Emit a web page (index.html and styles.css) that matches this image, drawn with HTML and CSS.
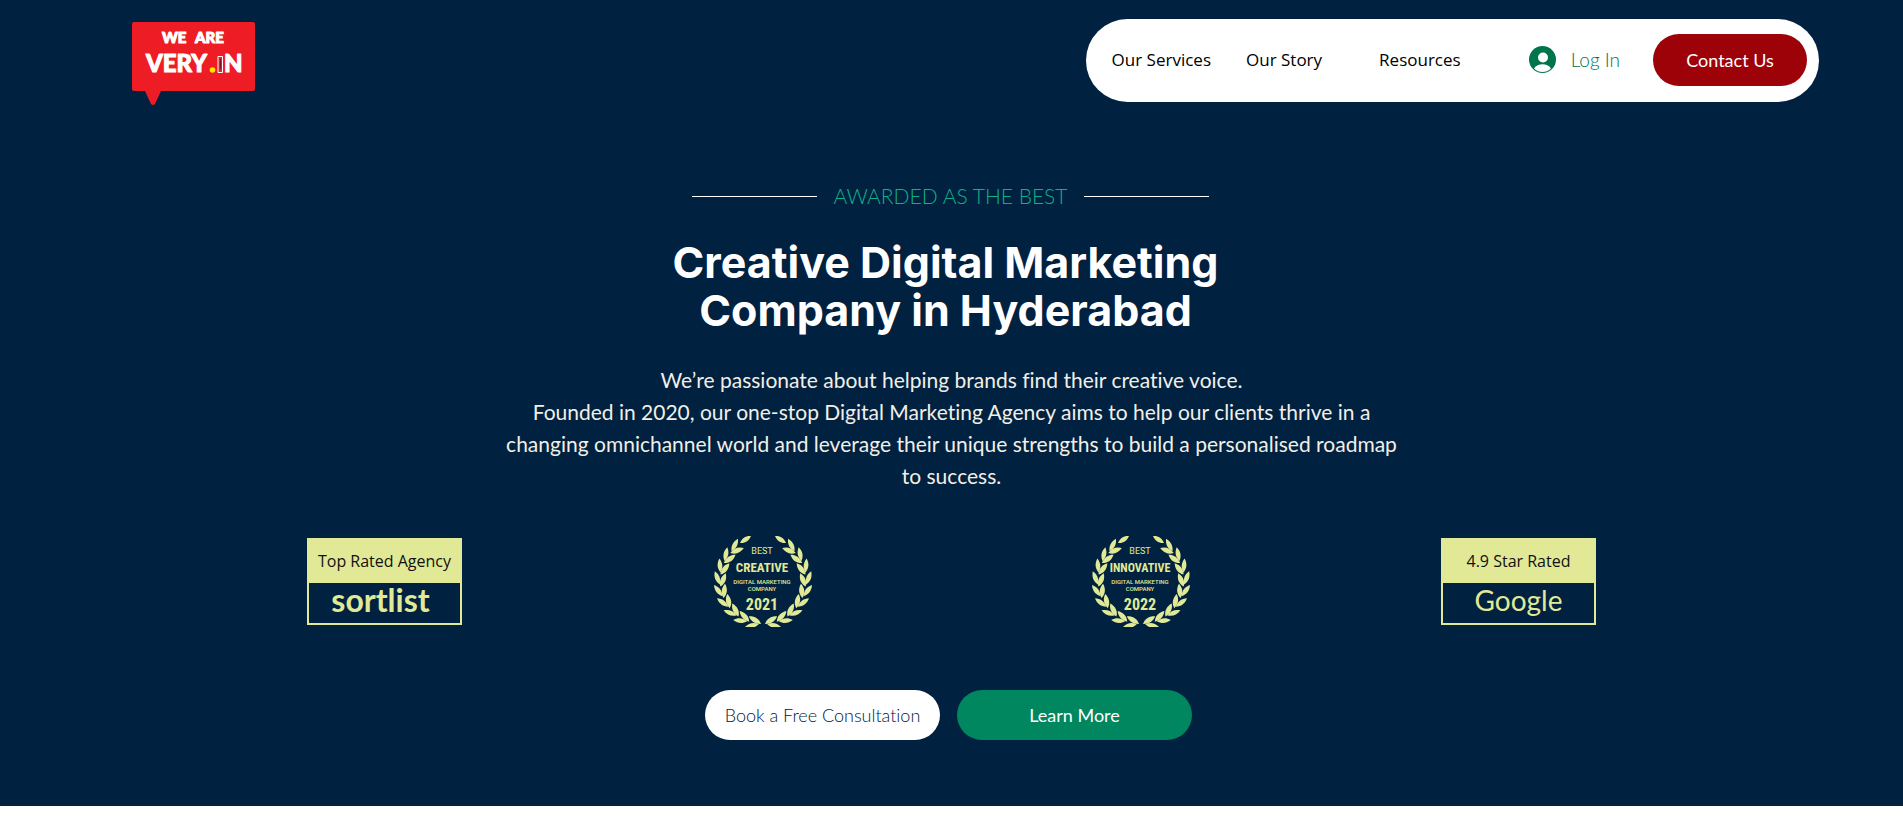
FILE: index.html
```html
<!DOCTYPE html>
<html lang="en">
<head>
<meta charset="utf-8">
<title>We Are Very.in</title>
<link rel="stylesheet" href="styles.css">
</head>
<body>
<svg class="defs" width="0" height="0" aria-hidden="true">
  <defs>
    <g id="sprig">
      <path d="M7 51C2.500 48 .5 44 1.500 38C6 41 8 45 7 51Z"/>
      <path d="M7.500 53C6 47 8 42.500 12.500 39.500C14 45 12.500 50 7.500 53Z"/>
    </g>
    <g id="branch">
      <use href="#sprig" transform="rotate(-78 50 46)"/>
      <use href="#sprig" transform="rotate(-62 50 46)"/>
      <use href="#sprig" transform="rotate(-46 50 46)"/>
      <use href="#sprig" transform="rotate(-30 50 46)"/>
      <use href="#sprig" transform="rotate(-14 50 46)"/>
      <use href="#sprig" transform="rotate(2 50 46)"/>
      <use href="#sprig" transform="rotate(18 50 46)"/>
      <use href="#sprig" transform="rotate(34 50 46)"/>
      <use href="#sprig" transform="rotate(50 50 46)"/>
      <path d="M27 8C29 3 33 .5 38 1C36 6 32 8.500 27 8Z"/>
    </g>
    <g id="laurel" fill="#e1e996">
      <use href="#branch"/>
      <use href="#branch" transform="translate(100 0) scale(-1 1)"/>
    </g>
  </defs>
</svg>
<div class="hero">
  <header class="header">
    <a class="logo" href="#" aria-label="We are Very.in">
      <svg width="123" height="84" viewBox="0 0 123 84">
        <path fill="#ee1c25" d="M2 0H121Q123 0 123 2V67Q123 69 121 69H29L23 82Q21 84 19 82L13 69H2Q0 69 0 67V2Q0 0 2 0Z"/>
        <g class="logo-text" fill="#fff" stroke="#fff">
          <text x="30" y="21" font-size="15" stroke-width="1">WE</text>
          <text x="63" y="21" font-size="15" stroke-width="1">ARE</text>
          <text x="14" y="50" font-size="24" stroke-width="1">VERY</text>
          <text x="92" y="50" font-size="24" stroke-width="1">N</text>
        </g>
        <circle cx="80.500" cy="48" r="2.800" fill="#ffe600"/>
        <path d="M86 34.500h4.500v16H86z" fill="#ee1c25" stroke="#fff" stroke-width="1"/>
        <path d="M88.500 37v10" stroke="#7c1016" stroke-width="1"/>
      </svg>
    </a>
    <nav class="nav">
      <a class="nav-link" href="#">Our Services</a>
      <a class="nav-link" href="#">Our Story</a>
      <a class="nav-link" href="#">Resources</a>
      <button class="login" type="button">
        <svg width="27" height="27" viewBox="0 0 27 27" aria-hidden="true">
          <circle cx="13.500" cy="13.500" r="13.500" fill="#00754c"/>
          <circle cx="14" cy="11.500" r="5" fill="#fff"/>
          <path d="M5 22.500C7 19.500 10 18.300 13.500 18.300S20 19.500 22 22.500C17.500 27.200 9.500 27.200 5 22.500Z" fill="#fff"/>
        </svg>
        <span>Log In</span>
      </button>
      <a class="contact" href="#">Contact Us</a>
    </nav>
  </header>
  <main class="main">
    <p class="eyebrow">AWARDED AS THE BEST</p>
    <h1 class="title">Creative Digital Marketing<br>Company in Hyderabad</h1>
    <p class="intro">We’re passionate about helping brands find their creative voice.<br>Founded in 2020, our one-stop Digital Marketing Agency aims to help our clients thrive in a<br>changing omnichannel world and leverage their unique strengths to build a personalised roadmap<br>to success.</p>
    <div class="awards">
      <div class="badge">
        <span class="badge-top">Top Rated Agency</span>
        <span class="badge-brand sortlist">sortlist</span>
      </div>
      <svg class="wreath" width="100" height="92" viewBox="0 0 100 92">
        <use href="#laurel"/>
        <g class="wreath-text">
          <text x="49" y="19" font-size="9">BEST</text>
          <text class="narrow" x="49" y="37" font-size="13">CREATIVE</text>
          <text class="tiny" x="49" y="49" font-size="6">DIGITAL MARKETING</text>
          <text class="tiny" x="49" y="56" font-size="6">COMPANY</text>
          <text class="narrow" x="49" y="75" font-size="16">2021</text>
        </g>
      </svg>
      <svg class="wreath" width="100" height="92" viewBox="0 0 100 92">
        <use href="#laurel"/>
        <g class="wreath-text">
          <text x="49" y="19" font-size="9">BEST</text>
          <text class="narrow" x="49" y="37" font-size="12">INNOVATIVE</text>
          <text class="tiny" x="49" y="49" font-size="6">DIGITAL MARKETING</text>
          <text class="tiny" x="49" y="56" font-size="6">COMPANY</text>
          <text class="narrow" x="49" y="75" font-size="16">2022</text>
        </g>
      </svg>
      <div class="badge">
        <span class="badge-top">4.9 Star Rated</span>
        <span class="badge-brand google">Google</span>
      </div>
    </div>
    <div class="actions">
      <a class="action action-light" href="#">Book a Free Consultation</a>
      <a class="action action-green" href="#">Learn More</a>
    </div>
  </main>
</div>
</body>
</html>
```
FILE: styles.css
```css
* { box-sizing: border-box; }
body {
  margin: 0;
  background: #fff;
  font-family: Lato, "Liberation Sans", sans-serif;
  font-variant-ligatures: none;
}
a { text-decoration: none; }
.defs { display: block; }
.hero {
  background: #002140;
  padding-bottom: 66px;
}
.header {
  display: flex;
  justify-content: space-between;
  align-items: flex-start;
  padding: 19px 84px 0 132px;
}
.logo { margin-top: 3px; }
.logo svg { display: block; }
.logo-text {
  font-family: Lato, sans-serif;
  font-weight: 900;
  stroke-linejoin: round;
}
.nav {
  display: flex;
  align-items: center;
  height: 83px;
  padding: 0 12px 2px 26px;
  border-radius: 42px;
  background: #fff;
}
.nav-link {
  color: #000;
  font-family: "Open Sans", sans-serif;
  font-size: 17px;
  line-height: 24px;
  margin-right: 35px;
}
.nav-link:nth-child(2) { margin-right: 57px; }
.nav-link:nth-child(3) { margin-right: 68px; }
.login {
  display: flex;
  align-items: center;
  gap: 15px;
  margin-right: 33px;
  padding: 0;
  border: 0;
  background: none;
  color: #00754c;
  font-family: inherit;
  font-size: 19px;
  font-weight: 300;
}
.contact {
  width: 154px;
  border-radius: 26px;
  background: #9d0208;
  color: #fff;
  font-size: 18px;
  line-height: 52px;
  text-align: center;
}
.main {
  display: flex;
  flex-direction: column;
  align-items: center;
  padding-top: 76px;
}
.eyebrow {
  display: flex;
  align-items: center;
  gap: 17px;
  margin: 0 2px 0 0;
  color: #10b088;
  font-size: 21px;
  font-weight: 300;
  line-height: 28px;
}
.eyebrow::before,
.eyebrow::after {
  content: "";
  width: 125px;
  height: 1px;
  background: #fff;
}
.title {
  margin: 28px 12px 0 0;
  color: #fff;
  font-family: Inter, sans-serif;
  font-size: 43px;
  font-weight: 700;
  line-height: 48px;
  text-align: center;
}
.intro {
  margin: 30px 0 0;
  color: #f2efe8;
  font-size: 21px;
  line-height: 32px;
  text-align: center;
}
.awards {
  display: grid;
  grid-template-columns: repeat(4, 1fr);
  justify-items: center;
  align-items: center;
  width: 100%;
  max-width: 1512px;
  margin-top: 43px;
}
.badge {
  display: flex;
  flex-direction: column;
  width: 155px;
  border: 2px solid #e1e996;
  text-align: center;
}
.badge-top {
  background: #e1e996;
  color: #111;
  font-family: "Open Sans", sans-serif;
  font-size: 16px;
  line-height: 43px;
}
.badge-brand {
  height: 40px;
  color: #e1e996;
}
.sortlist {
  padding-right: 8px;
  font-size: 32px;
  font-weight: 700;
  line-height: 34px;
}
.google {
  font-size: 28px;
  line-height: 35px;
}
.wreath { display: block; }
.wreath-text {
  fill: #e1e996;
  font-family: Roboto, sans-serif;
  text-anchor: middle;
}
.narrow {
  font-family: "Liberation Sans Narrow", "Roboto Condensed", Roboto, sans-serif;
  font-weight: 700;
}
.tiny { font-weight: 500; }
.actions {
  display: flex;
  gap: 17px;
  margin: 63px 6px 0 0;
}
.action {
  width: 235px;
  border-radius: 25px;
  font-size: 18px;
  line-height: 50px;
  text-align: center;
}
.action-light {
  background: #fff;
  color: #002140;
  font-weight: 300;
}
.action-green {
  background: #00875f;
  color: #fff;
}
```
